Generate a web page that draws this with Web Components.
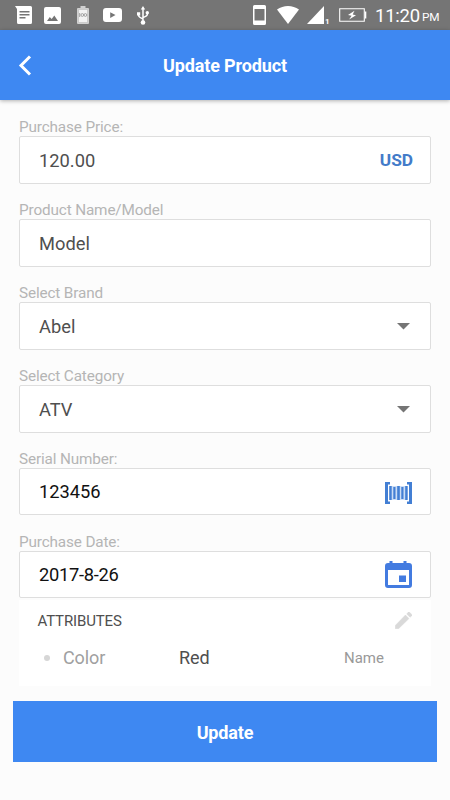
<!DOCTYPE html>
<html lang="en">
<head>
<meta charset="utf-8">
<title>Update Product</title>
<style>
html,body{margin:0;height:100%;background:#fcfcfc;font-family:Roboto,"Liberation Sans",sans-serif}
</style>
</head>
<body>
<product-page></product-page>
<script>
const define = (name, html) => {
  const template = document.createElement('template');
  template.innerHTML = html;
  customElements.define(name, class extends HTMLElement {
    constructor() {
      super();
      this.attachShadow({ mode: 'open' }).append(template.content.cloneNode(true));
    }
  });
};

define('status-bar', `
<style>
:host{display:flex;justify-content:space-between;height:30px;background:#757575;color:#fff;box-sizing:border-box;padding:0 10px 0 15px}
div{display:flex;align-items:center;height:30px}
svg{display:block;flex:none;fill:#fff}
.time{font-size:18.5px;letter-spacing:-.25px;line-height:30px;margin-left:8px;width:47px;white-space:nowrap;padding-top:2px;box-sizing:border-box}
.pm{font-size:11.8px;letter-spacing:-.2px;line-height:30px;padding-top:4px;width:18px}
.one{font-size:8px;font-weight:700;width:5px;margin-left:1px;padding-top:12px}
</style>
<div>
  <svg width="18" height="18" viewBox="0 0 18 18"><path fill-rule="evenodd" d="M0 0H15.500Q17 0 17 1.500V16.500Q17 18 15.500 18H3.500Q2 18 2 16.500V3ZM4.500 5v1.600h10V5ZM4.500 8v1.600h10V8ZM4.500 11v1.600h6V11Z"/></svg>
  <svg style="margin-left:11px" width="17" height="17" viewBox="0 0 17 17"><path fill-rule="evenodd" d="M2 0H15Q17 0 17 2V15Q17 17 15 17H2Q0 17 0 15V2Q0 0 2 0ZM3 14H14L10.300 8.500 7.700 12 5.800 10Z"/></svg>
  <svg style="margin-left:16px" width="12" height="18" viewBox="0 0 12 18"><path d="M3.500 0h5v2H11q1 0 1 1v14q0 1-1 1H1q-1 0-1-1V3q0-1 1-1h2.500z" fill="#d0d0d0"/><path d="M1.500 3.500h9v13h-9z" fill="#f2f2f2" stroke="#bdbdbd" stroke-width=".6"/><g fill="none" stroke="#999" stroke-width=".9"><path d="M2.700 7v4"/><circle cx="5.300" cy="9" r="1.400"/><circle cx="8.400" cy="9" r="1.400"/></g></svg>
  <svg style="margin-left:14px" width="19" height="14" viewBox="0 0 19 14"><path fill-rule="evenodd" d="M3 0H16Q19 0 19 3V11Q19 14 16 14H3Q0 14 0 11V3Q0 0 3 0ZM7.200 4.200V10L12.500 7.100Z"/></svg>
  <svg style="margin-left:15px" width="12" height="19" viewBox="0 0 12 19"><path d="M6 0l2.200 3.500H3.800zM0 6.200h3.200v3.200H0z"/><circle cx="10.300" cy="6.800" r="1.700"/><circle cx="6" cy="16.500" r="2.300"/><path d="M6 3v13M1.600 8v1.500q0 1.500 4.400 3.500M10.300 7v1.500q0 1.500-4.300 3" fill="none" stroke="#fff" stroke-width="1.500"/></svg>
</div>
<div>
  <svg width="13" height="20" viewBox="0 0 13 20"><path fill-rule="evenodd" d="M1.500 0h10Q13 0 13 1.500v17q0 1.500-1.500 1.500h-10Q0 20 0 18.500v-17Q0 0 1.500 0zM1.500 4v11.500h10V4z"/></svg>
  <svg style="margin-left:11px" width="22" height="18" viewBox="0 0 22 18"><path d="M0 3.500Q5 0 11 0t11 3.500L11 18z"/></svg>
  <svg style="margin-left:8px" width="17" height="18" viewBox="0 0 17 18"><path d="M17 0v18H0z"/></svg>
  <span class="one">1</span>
  <svg style="margin-left:9px" width="28" height="14" viewBox="0 0 28 14"><path d="M.7.700h24.600v12.600H.7z" fill="none" stroke="#fff" stroke-width="1.100"/><path d="M26 3.500h1.300v7H26zM15.500 2.800L9 7l3.600.7-2.500 3.800L17 7.200l-3.300-.8z"/></svg>
  <span class="time">11:20</span><span class="pm">PM</span>
</div>`);

define('app-bar', `
<style>
:host{display:grid;grid-template-columns:50px 1fr 50px;align-items:center;height:70px;background:#3e88f2;color:#fff;box-shadow:0 1px 4px rgba(0,0,0,.3);position:relative}
svg{display:block;margin-left:18px}
h1{margin:0;font-size:18px;font-weight:700;text-align:center;line-height:24px;padding-top:2px;letter-spacing:-.14px}
</style>
<svg width="14" height="21" viewBox="0 0 14 21"><path d="M12 1.500L3 10.500l9 9" fill="none" stroke="#fff" stroke-width="3"/></svg>
<h1><slot></slot></h1>`);

define('form-field', `
<style>
:host{display:block;height:83px;color:#4f4f4f}
.label{display:block;box-sizing:border-box;height:19px;padding-top:1px;font-size:15.3px;letter-spacing:-.14px;line-height:19px;color:#b5b5b5;font-weight:400;white-space:nowrap}
.box{box-sizing:border-box;height:var(--box-height,48px);border:1px solid #dedede;border-radius:2px;background:#fff;display:flex;align-items:center;justify-content:space-between;padding:0 17px 0 19px;font-size:18.3px}
</style>
<div class="label"><slot name="label"></slot></div>
<div class="box"><slot></slot><slot name="end"></slot></div>`);

define('drop-arrow', `
<style>:host{display:block;margin-right:3px}svg{display:block}</style>
<svg width="13" height="7" viewBox="0 0 13 7"><path d="M0 0h13L6.500 6.500z" fill="#757575"/></svg>`);

define('barcode-icon', `
<style>:host{display:block;margin-right:1px;padding-top:2px}svg{display:block}</style>
<svg width="27" height="22" viewBox="0 0 27 22"><path fill="#8fb6ea" d="M6 4h15v14H6z" opacity=".45"/><path fill="#437fd4" d="M0 0h5v2.500H3v17h2V22H0zM27 0h-5v2.500h2v17h-2V22h5zM4.200 4h2.500v14H4.200zM8.300 5h2.200v12H8.300zM12.200 4h2.600v14h-2.600zM16.300 5h2.200v12h-2.200zM20.200 4h2.500v14h-2.500z"/></svg>`);

define('calendar-icon', `
<style>:host{display:block;margin-right:1px}svg{display:block}</style>
<svg width="27" height="27" viewBox="0 0 27 27"><path fill="#437be0" fill-rule="evenodd" d="M4.500 0h3v2h11V0h3v2H24q3 0 3 3v19q0 3-3 3H3q-3 0-3-3V5q0-3 3-3h1.500zM3 9v15h21V9zM14 14.500h7V21h-7z"/></svg>`);

define('attribute-panel', `
<style>
:host{display:block;background:#fff;height:86px;box-sizing:border-box;padding-top:8px}
.head{display:flex;justify-content:space-between;align-items:center;height:25px;padding:0 19px 0 18.500px;font-size:15px;letter-spacing:-.15px;color:#4f4f4f}
.row{display:grid;grid-template-columns:19px 116px 165px 1fr;align-items:center;height:49px;padding-left:25px;font-size:18px;letter-spacing:-.1px;color:#4f4f4f}
.dot{width:6px;height:6px;border-radius:50%;background:#d6d6d6}
.key{color:#a0a0a0}.name{color:#999;font-size:15px;letter-spacing:0}
svg{display:block;margin-top:-1px}
</style>
<div class="head"><span>ATTRIBUTES</span><svg width="17" height="17" viewBox="3 3 18 18"><path fill="#d9d9d9" stroke="#d9d9d9" stroke-width=".5" stroke-linejoin="round" d="M3.300 17.250V20.700h3.450L17.810 9.940l-3.750-3.750zM20.710 7.040a1 1 0 0 0 0-1.410l-2.340-2.340a1 1 0 0 0-1.410 0l-1.530 1.830 3.450 3.450z"/></svg></div>
<div class="row"><span class="dot"></span><span class="key">Color</span><span>Red</span><span class="name">Name</span></div>`);

define('primary-button', `
<style>
:host{display:flex;align-items:center;justify-content:center;height:61px;background:#3e88f2;color:#fff;font-size:18px;font-weight:700;letter-spacing:-.15px}
span{padding-top:2px}
</style><span><slot></slot></span>`);

define('product-page', `
<style>
:host{display:block;height:800px;overflow:hidden;background:#fcfcfc}
main{padding:17px 19px 0}
.usd{color:#437bc9;font-weight:700;font-size:17.3px}
.dark{color:#111}
.date{letter-spacing:-.28px}
.short{--box-height:47px}
attribute-panel{margin-top:-15px}
primary-button{margin:15px 13px 0}
</style>
<status-bar></status-bar>
<app-bar>Update Product</app-bar>
<main>
<form-field><span slot="label">Purchase Price:</span><span>120.00</span><span slot="end" class="usd">USD</span></form-field>
<form-field><span slot="label">Product Name/Model</span><span>Model</span></form-field>
<form-field><span slot="label">Select Brand</span><span>Abel</span><drop-arrow slot="end"></drop-arrow></form-field>
<form-field><span slot="label">Select Category</span><span>ATV</span><drop-arrow slot="end"></drop-arrow></form-field>
<form-field class="short"><span slot="label">Serial Number:</span><span class="dark">123456</span><barcode-icon slot="end"></barcode-icon></form-field>
<form-field class="short"><span slot="label">Purchase Date:</span><span class="dark date">2017-8-26</span><calendar-icon slot="end"></calendar-icon></form-field>
<attribute-panel></attribute-panel>
</main>
<primary-button>Update</primary-button>`);
</script>
</body>
</html>
